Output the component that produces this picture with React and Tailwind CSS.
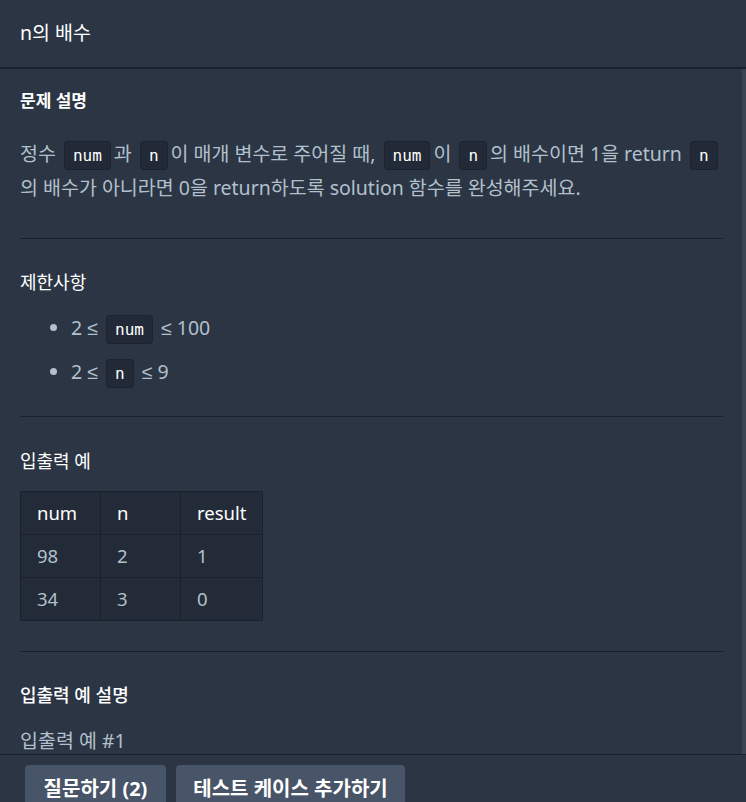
const FONT = { fontFamily: '"Noto Sans", "Noto Sans CJK KR", sans-serif' };

function Code({ children }) {
  return (
    <code className="ml-[3px] mr-[3px] rounded-[4px] border border-[#1c2330] bg-[#222a37] px-2 py-1 font-['DejaVu_Sans_Mono',monospace] text-[16px] leading-none text-white">
      {children}
    </code>
  );
}

function Le() {
  return <span className="font-['Liberation_Sans',sans-serif]">≤</span>;
}

function Divider() {
  return <hr className="border-0 border-t border-[#1a212d]" />;
}

const ROWS = [
  ['98', '2', '1'],
  ['34', '3', '0'],
];

export default function App() {
  return (
    <div className="flex h-[802px] w-[746px] flex-col overflow-hidden bg-[#2b3544] text-[19.5px]" style={FONT}>
      <header className="flex h-[69px] shrink-0 items-center border-b-2 border-[#1a212d] px-5 pb-[2px] text-[19.5px] text-white">
        n의 배수
      </header>

      <main className="relative flex-1 overflow-hidden pl-5 pr-[23px]">
        <div className="absolute right-0 top-0 h-full w-[4px] bg-[#3a4454]" />

        <h5 className="mt-5 text-[17px] font-bold leading-6 text-white">문제 설명</h5>
        <p className="mt-6 leading-[34px] text-[#b2c0cc]">
          정수 <Code>num</Code>과 <Code>n</Code>이 매개 변수로 주어질 때, <Code>num</Code>이 <Code>n</Code>의 배수이면 1을 return <Code>n</Code>의 배수가 아니라면 0을 return하도록 solution 함수를 완성해주세요.
        </p>

        <div className="mt-[33px]">
          <Divider />
        </div>

        <h5 className="mt-[31px] text-[18px] leading-6 text-white">제한사항</h5>
        <ul className="mt-3 list-disc pl-[51px] text-[#b2c0cc] marker:text-[#b2c0cc]">
          <li className="leading-[44px]">2 <Le /> <Code>num</Code> <Le /> 100</li>
          <li className="leading-[44px]">2 <Le /> <Code>n</Code> <Le /> 9</li>
        </ul>

        <div className="mt-[22px]">
          <Divider />
        </div>

        <h5 className="mt-8 text-[18px] leading-6 text-white">입출력 예</h5>
        <table className="mt-[18px] border-collapse border border-[#1a212d] bg-[#232b39] text-[18.5px]">
          <thead>
            <tr className="h-[43px] text-white">
              <th className="w-[80px] border border-[#1a212d] px-4 text-left font-normal">num</th>
              <th className="w-[80px] border border-[#1a212d] px-4 text-left font-normal">n</th>
              <th className="border border-[#1a212d] px-4 text-left font-normal">result</th>
            </tr>
          </thead>
          <tbody>
            {ROWS.map((row) => (
              <tr key={row[0]} className="h-[43px] text-[#b2c0cc]">
                {row.map((cell, i) => (
                  <td key={i} className="border border-[#1a212d] px-4">{cell}</td>
                ))}
              </tr>
            ))}
          </tbody>
        </table>

        <div className="mt-[30px]">
          <Divider />
        </div>

        <h5 className="mt-[31px] text-[18px] font-medium leading-6 text-white">입출력 예 설명</h5>
        <p className="mt-[22px] leading-6 text-[#b2c0cc]">입출력 예 #1</p>
      </main>

      <footer className="flex h-[48px] shrink-0 items-start gap-[10px] border-t border-[#1a212d] px-[25px] pt-[10px]">
        <button type="button" className="h-[48px] w-[141px] rounded-[4px] bg-[#485468] text-center text-[20px] font-bold text-white">
          질문하기 (2)
        </button>
        <button type="button" className="h-[48px] w-[229px] rounded-[4px] bg-[#485468] text-center text-[20px] font-bold text-white">
          테스트 케이스 추가하기
        </button>
      </footer>
    </div>
  );
}
